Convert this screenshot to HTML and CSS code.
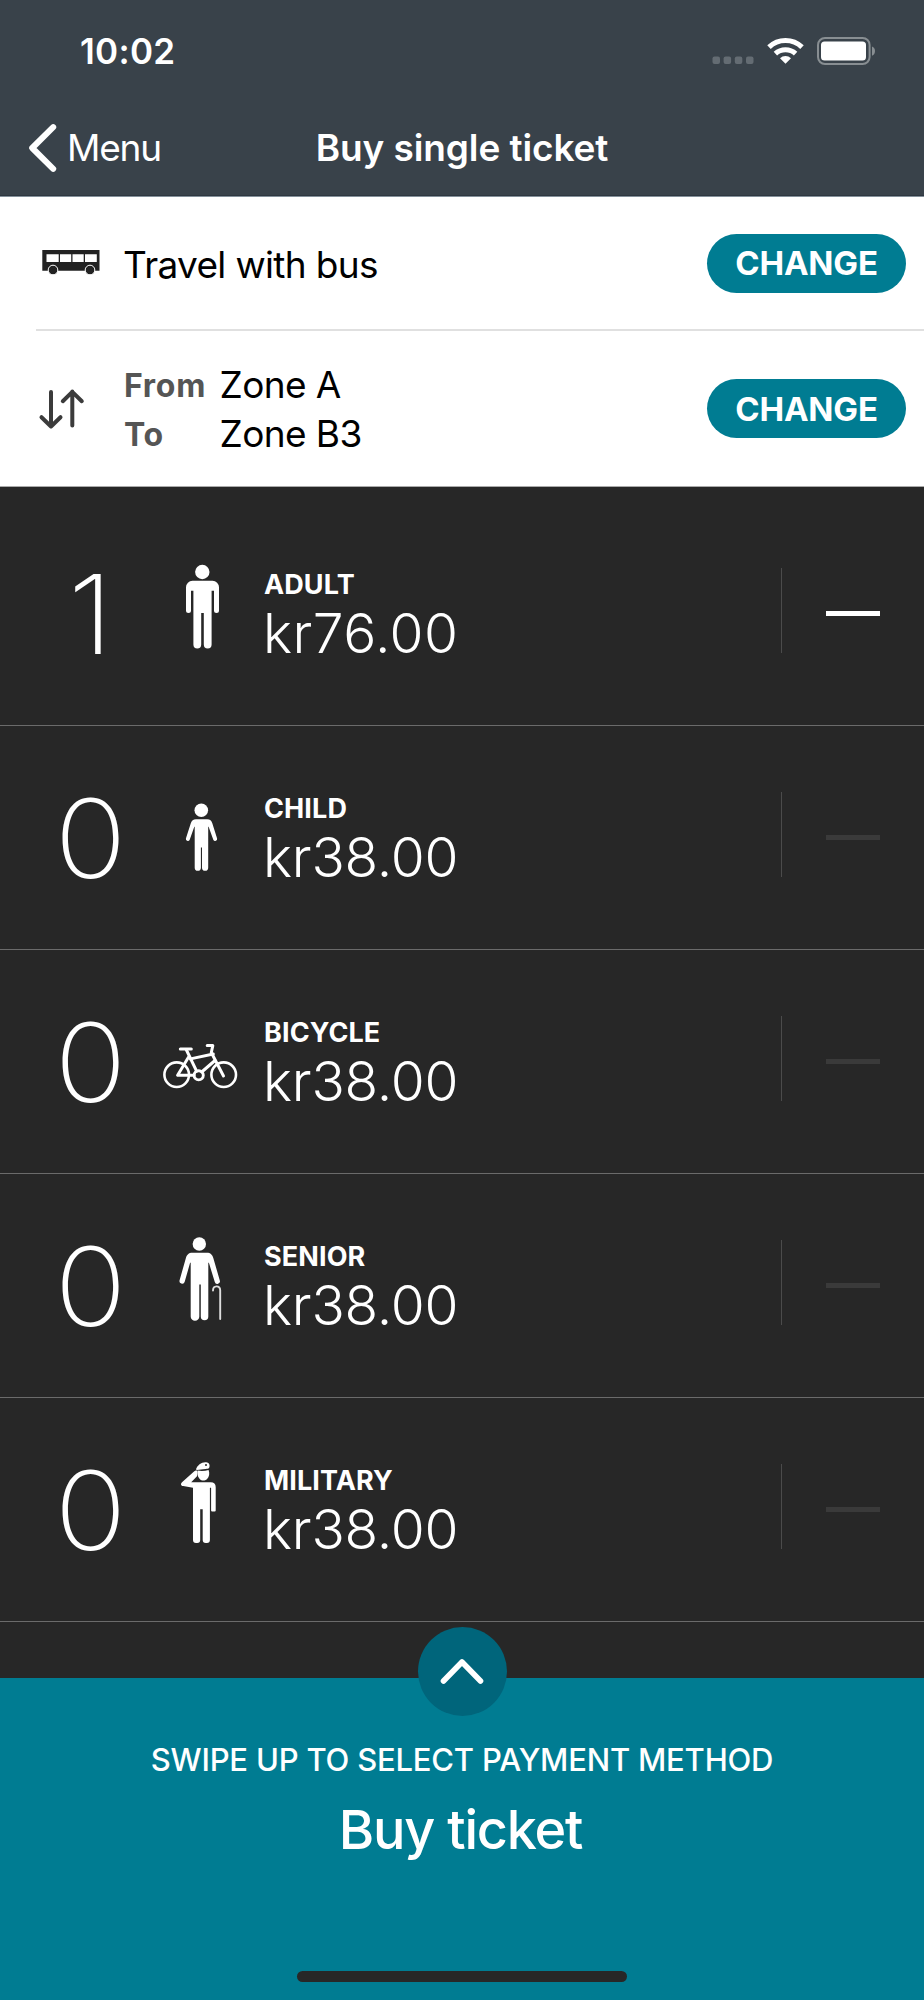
FILE: index.html
```html
<!DOCTYPE html>
<html lang="en">
<head>
<meta charset="utf-8">
<title>Buy single ticket</title>
<link rel="stylesheet" href="styles.css">
</head>
<body>
<div class="screen">
  <header class="header">
    <div class="status">
      <span class="time">10:02</span>
      <div class="status-icons">
        <svg class="signal" width="42" height="28" viewBox="0 0 42 28"><g fill="#646c73"><rect x="0.5" y="19.5" width="7.5" height="7.5" rx="2"/><rect x="11.6" y="19.5" width="7.5" height="7.5" rx="2"/><rect x="22.8" y="19.5" width="7.5" height="7.5" rx="2"/><rect x="34" y="19.5" width="7.5" height="7.5" rx="2"/></g></svg>
        <svg class="wifi" width="37" height="28" viewBox="0 0 37 28"><g fill="none" stroke="#fff" stroke-width="5"><path d="M2 10.1a23.8 23.8 0 0 1 33 0"/><path d="M8.4 16.7a14.8 14.8 0 0 1 20.2 0"/></g><path d="M13 21.3a8 8 0 0 1 11 0L18.5 26.8z" fill="#fff"/></svg>
        <svg class="battery" width="60" height="28" viewBox="0 0 60 28"><rect x="1" y="1" width="51.6" height="26" rx="7" fill="none" stroke="#888e92" stroke-width="2"/><rect x="4" y="4.5" width="45" height="19" rx="3.5" fill="#fff"/><path d="M55 9.5c4 1.2 4 8 0 9.2z" fill="#888e92"/></svg>
      </div>
    </div>
    <nav class="nav">
      <a class="back"><svg width="30" height="50" viewBox="0 0 30 50"><path d="M25.2 4.2L4.2 25L25.2 45.8" fill="none" stroke="#fff" stroke-width="6" stroke-linecap="round" stroke-linejoin="round"/></svg><span>Menu</span></a>
      <h1 class="title">Buy single ticket</h1>
    </nav>
  </header>

  <section class="trip">
    <div class="trip-row mode">
      <svg class="bus" width="60" height="28" viewBox="0 0 60 28"><path d="M1.3 1h57.2v20.7H1.3z" fill="#222"/><path d="M5.5 5.2h12.2v7.8H5.5zM19 5.2h11.2v7.8H19zM31.5 5.2h11.2v7.8H31.5zM44 5.2h11.8v7.8H44z" fill="#fff"/><g fill="#222" stroke="#fff"><circle cx="12" cy="21" r="4.8"/><circle cx="49" cy="21" r="4.8"/></g></svg>
      <span class="mode-name">Travel with bus</span>
      <button class="change">CHANGE</button>
    </div>
    <div class="trip-row route">
      <svg class="swap" width="48" height="44" viewBox="0 0 48 44"><g fill="none" stroke="#3b3b3b" stroke-width="4" stroke-linecap="round" stroke-linejoin="round"><path d="M13 5v34M3.5 30.2l9.5 9.3 9.5-9.3"/><path d="M34.3 38.5V4.5M24.8 14.2l9.5-9.3 9.5 9.3"/></g></svg>
      <div class="zones">
        <span class="dir">From</span><span class="zone">Zone A</span>
        <span class="dir">To</span><span class="zone">Zone B3</span>
      </div>
      <button class="change">CHANGE</button>
    </div>
  </section>

  <main class="tickets">
    <div class="ticket active">
      <span class="count">1</span>
      <svg class="figure" width="80" height="90" viewBox="0 0 80 90"><g fill="#fff"><circle cx="42.3" cy="8" r="7.2"/><path d="M32.5 16.8h20a6.5 6.5 0 0 1 6.5 6.5V46.6a2.5 2.5 0 0 1-5 0V26.8h-2.4V80.5a3.6 3.6 0 0 1-7.8 0V49h-2.6V80.5a3.6 3.6 0 0 1-7.8 0V26.8H31V46.6a2.5 2.5 0 0 1-5 0V23.3a6.5 6.5 0 0 1 6.5-6.5z"/></g></svg>
      <div class="info"><span class="name">ADULT</span><span class="price">kr76.00</span></div>
      <span class="rule"></span><button class="minus" aria-label="Remove"></button>
    </div>
    <div class="ticket">
      <span class="count">0</span>
      <svg class="figure" width="80" height="90" viewBox="0 0 80 90"><g fill="#fff"><circle cx="41.3" cy="22.3" r="6.8"/><path d="M36 31.3h11.2c2.8 0 4.3 1.6 5.1 4l4.8 15.2a2 2 0 0 1-3.7 1.4L48.6 38.8H48.2V79.7a3 3 0 0 1-6.2 0V59.6H40.9V79.7a3 3 0 0 1-6.2 0V38.8H34.3L29.6 51.9a2 2 0 0 1-3.7-1.4L30.8 35.3c.9-2.5 2.4-4 5.2-4z"/></g></svg>
      <div class="info"><span class="name">CHILD</span><span class="price">kr38.00</span></div>
      <span class="rule"></span><button class="minus" aria-label="Remove"></button>
    </div>
    <div class="ticket">
      <span class="count">0</span>
      <svg class="figure" width="80" height="90" viewBox="0 0 80 90"><g fill="none" stroke="#fff" stroke-width="3" stroke-linecap="round" stroke-linejoin="round"><circle cx="16.7" cy="62.7" r="12.3" stroke-width="2.6"/><circle cx="63.7" cy="62.7" r="12.3" stroke-width="2.6"/><circle cx="38.7" cy="63.3" r="4.6" stroke-width="2.9"/><path d="M20.3 37H31.3"/><path d="M26.2 37.5L36.6 59.2M28.600 45L17.600 63.2H34"/><path d="M30.500 46.900L53.300 42M55 48.500L41.700 60"/><path d="M47.200 33.600H52.800L51.300 40.500L63.500 64"/></g></svg>
      <div class="info"><span class="name">BICYCLE</span><span class="price">kr38.00</span></div>
      <span class="rule"></span><button class="minus" aria-label="Remove"></button>
    </div>
    <div class="ticket">
      <span class="count">0</span>
      <svg class="figure" width="80" height="90" viewBox="0 0 80 90"><g fill="#fff"><circle cx="39.3" cy="8" r="6.7"/><path d="M32.5 16.7h14.2c4 0 5.6 2 6.6 5.2L59.8 44.5a2.6 2.6 0 0 1-5 1.6L48.9 26.8H48.3V80.5a3.6 3.6 0 0 1-7.5 0V48.6H39.3V80.5a3.9 3.9 0 0 1-8.6 0V26.8H30.1L24.7 45.8a2.6 2.6 0 0 1-5.1-1.5L25.9 21.9c1-3.2 2.6-5.2 6.6-5.2z"/></g><path d="M53 54.5c0-5.3 7.2-5.6 7.2-.3V83" fill="none" stroke="#ddd" stroke-width="1.9" stroke-linecap="round"/></svg>
      <div class="info"><span class="name">SENIOR</span><span class="price">kr38.00</span></div>
      <span class="rule"></span><button class="minus" aria-label="Remove"></button>
    </div>
    <div class="ticket">
      <span class="count">0</span>
      <svg class="figure" width="80" height="90" viewBox="0 0 80 90"><g fill="#fff"><path d="M37.3 11.3L36.2 10.2 34.3 11.3 22 22.3c-1.9 1.9-.9 3.5 1.2 3.8L33 27.7V80a3 3 0 0 0 3 3h1.2a3 3 0 0 0 3-3V49.3h2.5V80a3 3 0 0 0 3 3h1.2a3 3 0 0 0 3-3V27.7h1.2V50.6a1 1 0 0 0 1 1h2.6a1 1 0 0 0 1-1V27.2c0-3.3-1.7-5-5-5H31.2L37 16.3z"/><path d="M37.6 10.600c4 .6 7.600.4 11-.7 1.200 3.300.8 7-1.700 9.300-2.100 1.900-5.200 1.900-7.200-.2-2.200-2.200-2.800-5.500-2.100-8.400z"/><path d="M36 9.300C37.300 5 41.800 1.700 46.200 2.200c2.800.4 4 2.500 3.100 5.300-.6 1.400-1.600 1.300-3.700 1.400-3.400.2-5.500.9-8.900 1z"/></g><circle cx="46" cy="4.900" r="1" fill="#272727"/></svg>
      <div class="info"><span class="name">MILITARY</span><span class="price">kr38.00</span></div>
      <span class="rule"></span><button class="minus" aria-label="Remove"></button>
    </div>
  </main>

  <footer class="pay">
    <span class="handle"><svg width="44" height="28" viewBox="0 0 44 28"><path d="M3.5 23L22 4L40.5 23" fill="none" stroke="#fff" stroke-width="5.6" stroke-linecap="round" stroke-linejoin="round"/></svg></span>
    <span class="hint">SWIPE UP TO SELECT PAYMENT METHOD</span>
    <span class="buy">Buy ticket</span>
    <span class="home"></span>
  </footer>
</div>
</body>
</html>
```
FILE: styles.css
```css
* { box-sizing: border-box; }
body { margin: 0; font-family: Inter, Roboto, sans-serif; background: #272727; }
button { border: 0; padding: 0; font-family: inherit; }
svg { display: block; flex: none; }
.screen { width: 924px; height: 2000px; display: flex; flex-direction: column; overflow: hidden; }

.header { height: 197px; background: #39424a; color: #fff; border-bottom: 1px solid #84909a; box-shadow: inset 0 -1px #2e3740; flex: none; }
.status { height: 101px; display: flex; align-items: center; justify-content: space-between; padding: 0 47px 0 80px; }
.time { font-size: 35px; font-weight: 600; letter-spacing: 0.3px; }
.status-icons { display: flex; gap: 13px; }
.nav { height: 95px; padding: 0 28px 2px; display: grid; grid-template-columns: 1fr auto 1fr; align-items: center; font-size: 37px; }
.back { display: flex; align-items: center; gap: 9px; font-weight: 400; letter-spacing: -1.2px; }
.title { margin: 0; font-size: 37px; font-weight: 600; letter-spacing: -0.1px; }

.trip { background: #fff; color: #000; height: 290px; border-bottom: 1px solid #aaa; flex: none; }
.trip-row { display: flex; align-items: center; padding-right: 18px; }
.mode { height: 134px; margin-left: 36px; padding-left: 5px; border-bottom: 2px solid #e0e0e0; }
.mode-name { margin-left: 22px; font-size: 37px; letter-spacing: -0.65px; padding-top: 2px; }
.route { height: 155px; padding-left: 38px; }
.zones { display: grid; grid-template-columns: 95.5px auto; line-height: 49px; margin-left: 38px; align-items: center; }
.dir { font-size: 32px; font-weight: 700; color: #555; padding-top: 3px; line-height: 46px; letter-spacing: 0.7px; }
.zone { font-size: 37px; letter-spacing: -0.6px; }
.change { margin-left: auto; width: 199px; height: 59px; border-radius: 30px; background: #007c92; color: #fff; font-size: 33px; font-weight: 700; letter-spacing: -0.2px; }

.tickets { padding-top: 15px; flex: 1; color: #fff; background: #272727; }
.ticket { height: 224px; border-bottom: 1px solid #6b6b6b; display: flex; align-items: flex-start; }
.count { width: 160px; padding-left: 21px; text-align: center; font-size: 109.5px; font-weight: 200; line-height: 224px; transform: scaleX(1.09); transform-origin: 91px 50%; }
.figure { margin-top: 62px; }
.info { width: 517px; padding: 65px 0 0 24px; display: flex; flex-direction: column; }
.name { font-size: 27px; font-weight: 700; line-height: 36px; letter-spacing: 0.1px; }
.price { margin-left: -1px; font-size: 55px; font-weight: 300; line-height: 61px; letter-spacing: -0.2px; }
.active .price { letter-spacing: 0.5px; }
.rule { margin: 66px 44px 0 24px; width: 1px; height: 85px; background: #4b4b4b; }
.minus { width: 54px; height: 5px; margin-top: 109px; background: #3a3a3a; }
.active .minus { background: #fff; }

.pay { height: 322px; background: #007c92; color: #fff; position: relative; display: flex; flex-direction: column; align-items: center; flex: none; }
.handle { position: absolute; top: -51px; left: 417.5px; width: 89px; height: 89px; border-radius: 50%; background: #00657b; display: flex; align-items: center; justify-content: center; }
.hint { margin-top: 62px; line-height: 40px; font-size: 31px; font-weight: 500; letter-spacing: -0.2px; white-space: nowrap; }
.buy { margin-top: 18px; padding-right: 3px; line-height: 64px; font-size: 54px; font-weight: 500; letter-spacing: -1.2px; }
.home { margin-top: 109px; width: 330px; height: 11px; border-radius: 6px; background: #272727; }
```
